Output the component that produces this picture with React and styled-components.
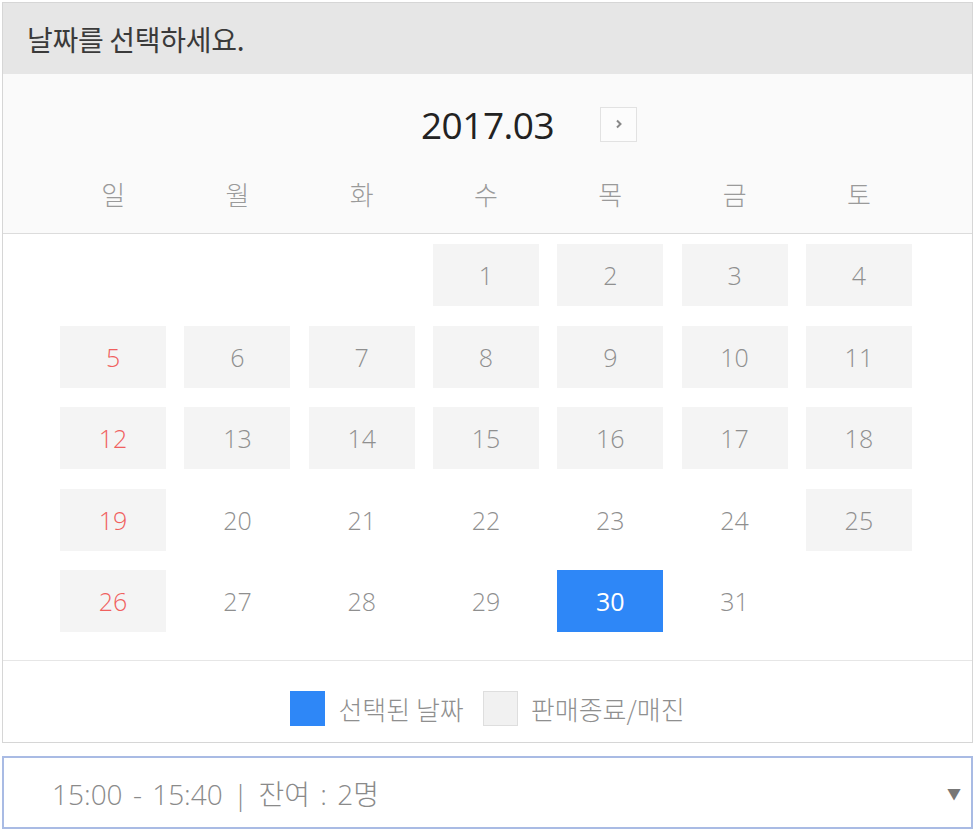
import React from "react";
import styled, { createGlobalStyle } from "styled-components";

const Global = createGlobalStyle`
  html, body { margin: 0; padding: 0; background: #fff; }
  body { font-family: "Open Sans", "Noto Sans CJK KR", sans-serif; }
`;

const Page = styled.div`
  margin: 2px 3px 0 2px;
  width: 971px;
`;

const Box = styled.div`
  border: 1px solid #d6d6d6;
  background: #fff;
`;

const TitleBar = styled.div`
  height: 71px;
  background: #e6e6e6;
  display: flex;
  align-items: center;
  padding-left: 24px;
  font-family: "Noto Sans CJK KR", sans-serif;
  font-size: 28px;
  color: #3a3a3a;
  letter-spacing: -0.3px;
`;

const CalHead = styled.div`
  height: 159px;
  background: #fafafa;
  border-bottom: 1px solid #dcdcdc;
  display: flex;
  flex-direction: column;
`;

const MonthRow = styled.div`
  display: grid;
  grid-template-columns: 1fr auto 1fr;
  align-items: center;
  height: 88px;
  padding-top: 12px;
  box-sizing: border-box;
`;

const MonthText = styled.div`
  grid-column: 2;
  font-size: 37px;
  color: #222;
  letter-spacing: -0.5px;
`;

const NextBtn = styled.button`
  grid-column: 3;
  justify-self: start;
  margin-left: 46px;
  width: 37px;
  height: 35px;
  border: 1px solid #e2e2e2;
  background: #fcfcfc;
  padding: 0;
  display: flex;
  align-items: center;
  justify-content: center;
`;

const Grid = styled.div`
  display: grid;
  grid-template-columns: repeat(7, 106px);
  column-gap: 18.3px;
  justify-content: center;
  padding-right: 3px;
`;

const WeekGrid = styled(Grid)`
  margin-top: 17px;
`;

const WeekDay = styled.div`
  text-align: center;
  font-family: "Noto Sans CJK KR", sans-serif;
  font-size: 26px;
  font-weight: 300;
  color: #9a9a9a;
  line-height: 30px;
`;

const Body = styled.div`
  padding: 10px 0 28px;
  border-bottom: 1px solid #e6e6e6;
`;

const DaysGrid = styled(Grid)`
  grid-auto-rows: 62px;
  row-gap: 19.5px;
`;

const Day = styled.div`
  display: flex;
  align-items: center;
  justify-content: center;
  font-size: 25px;
  font-weight: ${(p) => (p.$selected ? 400 : 300)};
  background: ${(p) => (p.$selected ? "#2e87f7" : p.$closed ? "#f4f4f4" : "transparent")};
  color: ${(p) => (p.$selected ? "#fff" : p.$sun ? "#f0605e" : "#8f8f8f")};
  grid-column-start: ${(p) => p.$start || "auto"};
`;

const Legend = styled.div`
  height: 81px;
  box-sizing: border-box;
  padding-top: 14px;
  display: flex;
  align-items: center;
  justify-content: center;
  gap: 13px;
  font-family: "Noto Sans CJK KR", sans-serif;
  font-size: 26px;
  font-weight: 300;
  color: #8f8f8f;
`;

const Swatch = styled.span`
  width: 35px;
  height: 35px;
  box-sizing: border-box;
  background: ${(p) => (p.$blue ? "#2e87f7" : "#f1f1f1")};
  border: ${(p) => (p.$blue ? "none" : "1px solid #dedede")};
  margin-left: ${(p) => (p.$gapLeft ? "6px" : "0")};
`;

const Select = styled.div`
  margin-top: 13px;
  height: 73px;
  box-sizing: border-box;
  border: 2px solid #a9bbe4;
  display: flex;
  align-items: center;
  justify-content: space-between;
  padding: 0 10px 0 48px;
  font-size: 28px;
  font-weight: 300;
  word-spacing: 3px;
  color: #8a8a8a;
`;

const Arrow = styled.span`
  font-size: 14px;
  color: #777;
`;

const days = Array.from({ length: 31 }, (_, i) => i + 1);
const closed = (d) => d <= 19 || d === 25 || d === 26;

export default function App() {
  return (
    <>
      <Global />
      <Page>
        <Box>
          <TitleBar>날짜를 선택하세요.</TitleBar>
          <CalHead>
            <MonthRow>
              <MonthText>2017.03</MonthText>
              <NextBtn aria-label="다음 달">
                <svg width="10" height="12" viewBox="0 0 10 12">
                  <path d="M3 2.5 L6.5 6 L3 9.5" fill="none" stroke="#888" strokeWidth="2" />
                </svg>
              </NextBtn>
            </MonthRow>
            <WeekGrid>
              {["일", "월", "화", "수", "목", "금", "토"].map((w) => (
                <WeekDay key={w}>{w}</WeekDay>
              ))}
            </WeekGrid>
          </CalHead>
          <Body>
            <DaysGrid>
              {days.map((d) => {
                const dow = (d + 2) % 7;
                return (
                  <Day
                    key={d}
                    $start={d === 1 ? 4 : undefined}
                    $sun={dow === 0}
                    $closed={closed(d)}
                    $selected={d === 30}
                  >
                    {d}
                  </Day>
                );
              })}
            </DaysGrid>
          </Body>
          <Legend>
            <Swatch $blue />
            <span>선택된 날짜</span>
            <Swatch $gapLeft />
            <span>판매종료/매진</span>
          </Legend>
        </Box>
        <Select>
          <span>15:00 - 15:40 | 잔여 : 2명</span>
          <Arrow>▼</Arrow>
        </Select>
      </Page>
    </>
  );
}
